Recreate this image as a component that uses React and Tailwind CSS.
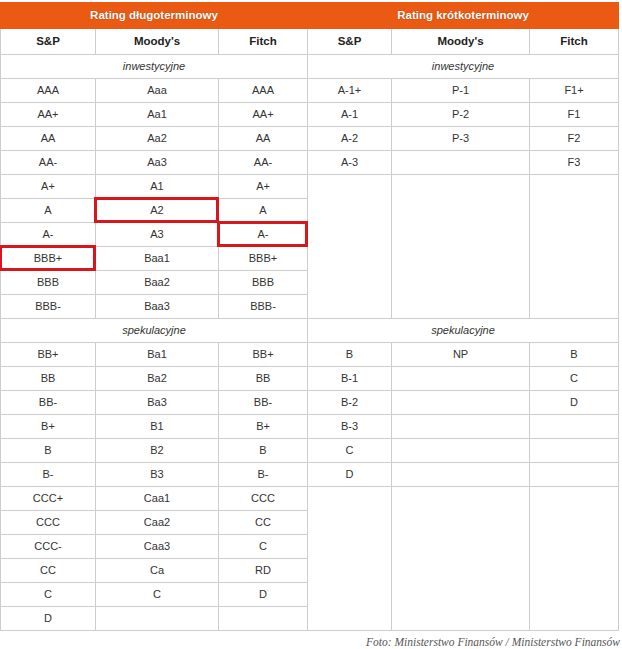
const longInv = [
  ['AAA', 'Aaa', 'AAA'],
  ['AA+', 'Aa1', 'AA+'],
  ['AA', 'Aa2', 'AA'],
  ['AA-', 'Aa3', 'AA-'],
  ['A+', 'A1', 'A+'],
  ['A', 'A2', 'A'],
  ['A-', 'A3', 'A-'],
  ['BBB+', 'Baa1', 'BBB+'],
  ['BBB', 'Baa2', 'BBB'],
  ['BBB-', 'Baa3', 'BBB-'],
];

const shortInv = [
  ['A-1+', 'P-1', 'F1+'],
  ['A-1', 'P-2', 'F1'],
  ['A-2', 'P-3', 'F2'],
  ['A-3', '', 'F3'],
];

const longSpec = [
  ['BB+', 'Ba1', 'BB+'],
  ['BB', 'Ba2', 'BB'],
  ['BB-', 'Ba3', 'BB-'],
  ['B+', 'B1', 'B+'],
  ['B', 'B2', 'B'],
  ['B-', 'B3', 'B-'],
  ['CCC+', 'Caa1', 'CCC'],
  ['CCC', 'Caa2', 'CC'],
  ['CCC-', 'Caa3', 'C'],
  ['CC', 'Ca', 'RD'],
  ['C', 'C', 'D'],
  ['D', '', ''],
];

const shortSpec = [
  ['B', 'NP', 'B'],
  ['B-1', '', 'C'],
  ['B-2', '', 'D'],
  ['B-3', '', ''],
  ['C', '', ''],
  ['D', '', ''],
];

// red frames in the long-term part: "row:col"
const marked = { 'A:1': true, 'A-:2': true, 'BBB+:0': true };

const Cell = ({ children, mark, rowSpan }) => (
  <td rowSpan={rowSpan} className="relative h-[24px] border border-[#cdcdcd] p-0 text-center align-middle">
    {children}
    {mark && (
      <span className="absolute -top-[2px] -left-[2px] -right-[1px] -bottom-[1px] border-[3px] border-[#d8161c]" />
    )}
  </td>
);

const Section = ({ title, left, right, marks }) => {
  const extra = left.length - right.length;
  return (
    <>
      <tr>
        <td colSpan={3} className="h-[24px] border border-[#cdcdcd] text-center italic">{title}</td>
        <td colSpan={3} className="h-[24px] border border-[#cdcdcd] text-center italic">{title}</td>
      </tr>
      {left.map((row, i) => {
        const r = right[i];
        return (
          <tr key={i}>
            {row.map((v, c) => (
              <Cell key={c} mark={marks && marked[`${row[0]}:${c}`]}>
                {v}
              </Cell>
            ))}
            {r && r.map((v, c) => <Cell key={'r' + c}>{v}</Cell>)}
            {i === right.length && extra > 0 && (
              <>
                <Cell rowSpan={extra} />
                <Cell rowSpan={extra} />
                <Cell rowSpan={extra} />
              </>
            )}
          </tr>
        );
      })}
    </>
  );
};

export default function App() {
  return (
    <div className="w-[622px] h-[649px] bg-white pt-[2px] text-[11px] text-[#333]" style={{ fontFamily: '"Liberation Sans", Arial, sans-serif' }}>
      <table className="w-[618px] table-fixed border-collapse">
        <colgroup>
          <col className="w-[95px]" />
          <col className="w-[123px]" />
          <col className="w-[89px]" />
          <col className="w-[84px]" />
          <col className="w-[138px]" />
          <col className="w-[89px]" />
        </colgroup>
        <thead>
          <tr>
            <th colSpan={3} className="h-[26px] bg-[#eb5a13] border border-[#eb5a13] text-[11.5px] font-bold text-white [text-shadow:0_0_1px_rgba(90,30,0,0.6)]">
              Rating długoterminowy
            </th>
            <th colSpan={3} className="h-[26px] bg-[#eb5a13] border border-[#eb5a13] text-[11.5px] font-bold text-white [text-shadow:0_0_1px_rgba(90,30,0,0.6)]">
              Rating krótkoterminowy
            </th>
          </tr>
          <tr>
            {["S&P", "Moody's", 'Fitch', "S&P", "Moody's", 'Fitch'].map((h, i) => (
              <th key={i} className="h-[26px] border border-[#cdcdcd] text-[11.5px] font-bold text-[#222]">{h}</th>
            ))}
          </tr>
        </thead>
        <tbody>
          <Section title="inwestycyjne" left={longInv} right={shortInv} marks />
          <Section title="spekulacyjne" left={longSpec} right={shortSpec} />
        </tbody>
      </table>
      <div className="mt-[3px] pr-[2px] text-right text-[11.5px] italic text-[#555]" style={{ fontFamily: '"Liberation Serif", "Times New Roman", serif' }}>
        Foto: Ministerstwo Finansów / Ministerstwo Finansów
      </div>
    </div>
  );
}
